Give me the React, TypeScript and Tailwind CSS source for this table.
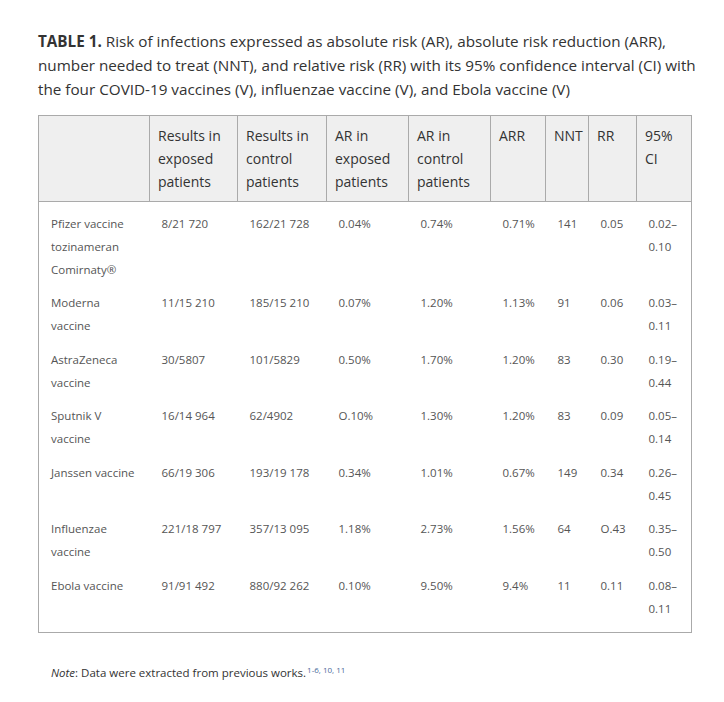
const headers = [
  { label: "", w: "w-[111px]" },
  { label: "Results in exposed patients", w: "w-[88px]" },
  { label: "Results in control patients", w: "w-[89px]" },
  { label: "AR in exposed patients", w: "w-[82px]" },
  { label: "AR in control patients", w: "w-[82px]" },
  { label: "ARR", w: "w-[55px]" },
  { label: "NNT", w: "w-[43px]" },
  { label: "RR", w: "w-[48px]" },
  { label: "95% CI", w: "w-[55px]" },
];

const rows = [
  ["Pfizer vaccine tozinameran Comirnaty®", "8/21 720", "162/21 728", "0.04%", "0.74%", "0.71%", "141", "0.05", "0.02–0.10"],
  ["Moderna vaccine", "11/15 210", "185/15 210", "0.07%", "1.20%", "1.13%", "91", "0.06", "0.03–0.11"],
  ["AstraZeneca vaccine", "30/5807", "101/5829", "0.50%", "1.70%", "1.20%", "83", "0.30", "0.19–0.44"],
  ["Sputnik V vaccine", "16/14 964", "62/4902", "O.10%", "1.30%", "1.20%", "83", "0.09", "0.05–0.14"],
  ["Janssen vaccine", "66/19 306", "193/19 178", "0.34%", "1.01%", "0.67%", "149", "0.34", "0.26–0.45"],
  ["Influenzae vaccine", "221/18 797", "357/13 095", "1.18%", "2.73%", "1.56%", "64", "O.43", "0.35–0.50"],
  ["Ebola vaccine", "91/91 492", "880/92 262", "0.10%", "9.50%", "9.4%", "11", "0.11", "0.08–0.11"],
];

export default function App() {
  return (
    <div className="min-h-[702px] w-[724px] bg-white pl-[38px] pt-[29px] font-['Open_Sans',sans-serif] text-[#333]">
      <p className="w-[662px] text-[15.25px] leading-[24px]">
        <span className="font-bold">TABLE 1.</span> Risk of infections expressed as absolute risk (AR), absolute risk
        reduction (ARR), number needed to treat (NNT), and relative risk (RR) with its 95% confidence interval (CI) with
        the four COVID-19 vaccines (V), influenzae vaccine (V), and Ebola vaccine (V)
      </p>

      <table className="mt-[14px] w-[654px] table-fixed border-collapse border border-[#aaa]">
        <thead>
          <tr className="bg-[#efefef]">
            {headers.map((h, i) => (
              <th
                key={i}
                className={`${h.w} border border-[#aaa] px-[8px] pt-[8px] pb-[8px] text-left align-top text-[14px] leading-[23px] font-normal text-[#333]`}
              >
                {h.label}
              </th>
            ))}
          </tr>
        </thead>
        <tbody>
          {rows.map((r, ri) => (
            <tr key={ri}>
              {r.map((c, ci) => (
                <td
                  key={ci}
                  className={`pl-[12px] pr-[12px] align-top text-[11.5px] leading-[22.75px] text-[#555] ${
                    ri === 0 ? "pt-[11px] pb-[5.5px]" : ri === rows.length - 1 ? "pt-[5.5px] pb-[12px]" : "py-[5.5px]"
                  }`}
                >
                  {c}
                </td>
              ))}
            </tr>
          ))}
        </tbody>
      </table>

      <p className="mt-[32px] pl-[13px] text-[11.5px] leading-[16px] text-[#333]">
        <em>Note</em>: Data were extracted from previous works.
        <sup className="ml-[1px] text-[8px] text-[#4a6a9a]">1-6, 10, 11</sup>
      </p>
    </div>
  );
}
